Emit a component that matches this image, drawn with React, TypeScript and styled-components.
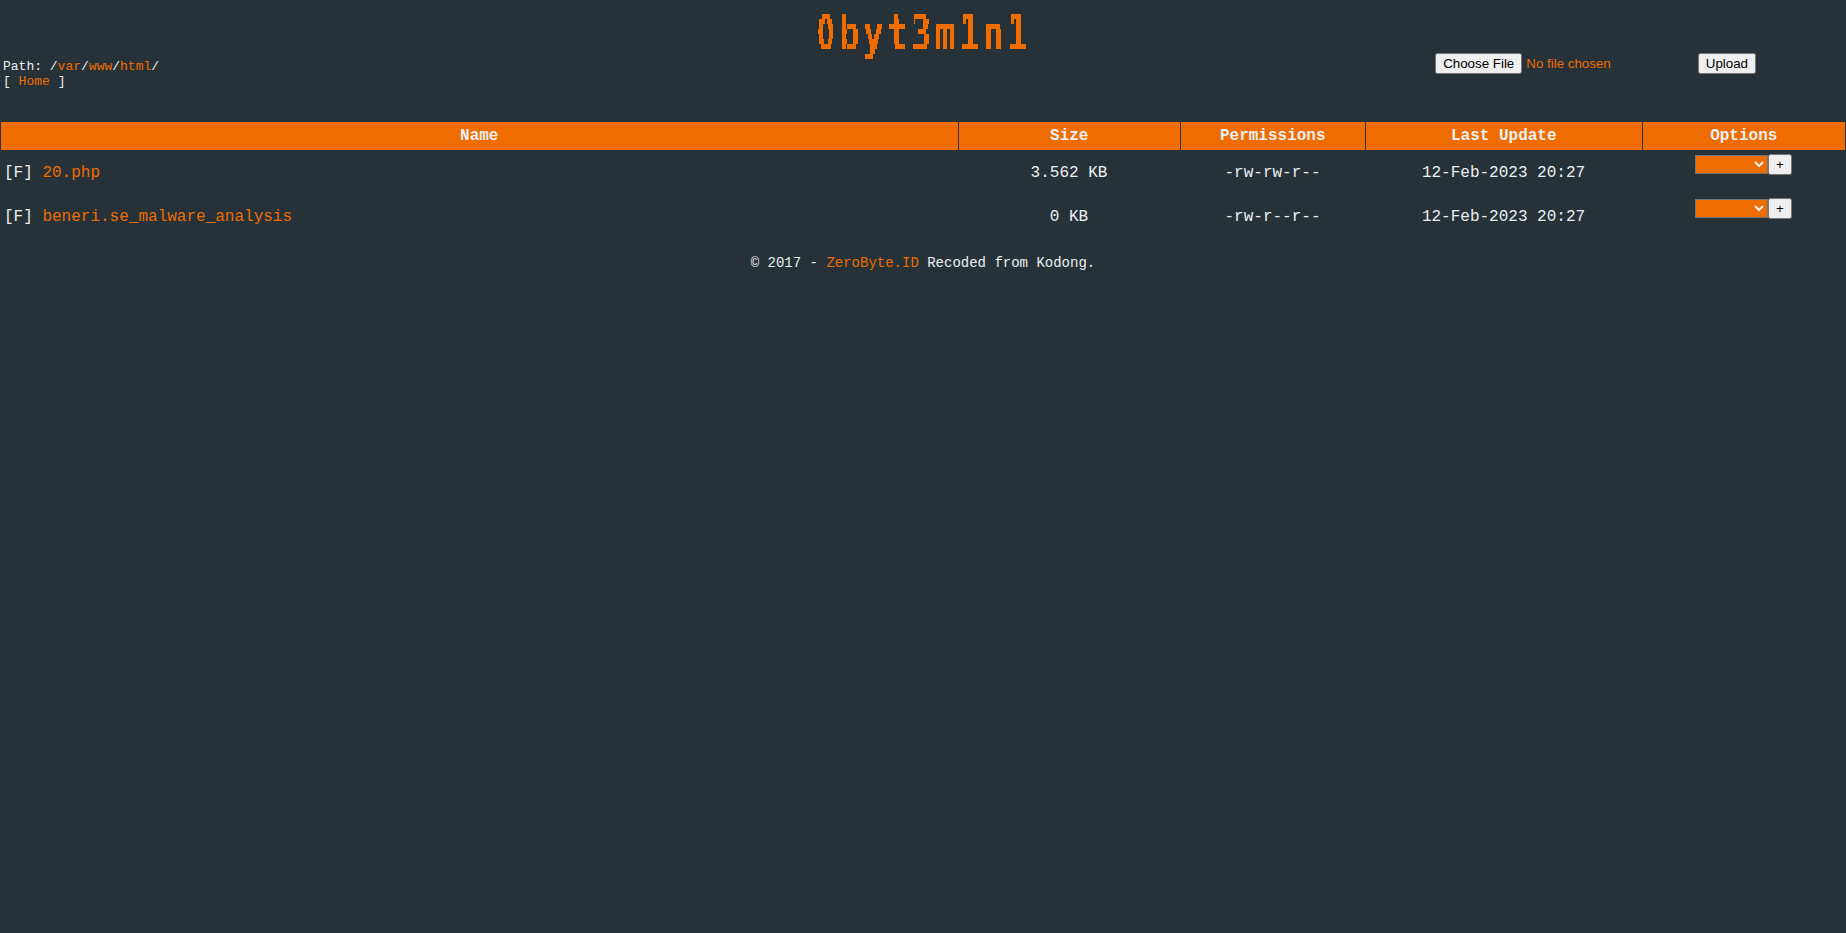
import React from 'react';
import styled, { createGlobalStyle } from 'styled-components';

type Entry = {
    name: string;
    size: string;
    permissions: string;
    updated: string;
};

const PATH = ['var', 'www', 'html'];

const ENTRIES: Entry[] = [
    { name: '20.php', size: '3.562 KB', permissions: '-rw-rw-r--', updated: '12-Feb-2023 20:27' },
    { name: 'beneri.se_malware_analysis', size: '0 KB', permissions: '-rw-r--r--', updated: '12-Feb-2023 20:27' },
];

// keeps one line of the title out of five and grows it to a 5px high step
const PixelFilter = () => (
    <FilterDefs aria-hidden="true">
        <filter
            id="pixel"
            filterUnits="userSpaceOnUse"
            primitiveUnits="userSpaceOnUse"
            x="0"
            y="0"
            width="1846"
            height="70"
            colorInterpolationFilters="sRGB"
        >
            <feFlood x="0" y="6" width="1" height="1" floodColor="#fff" result="dot" />
            <feComposite in="dot" in2="dot" operator="over" x="0" y="4" width="1" height="5" />
            <feTile x="0" y="0" width="1846" height="70" result="grid" />
            <feComposite in="SourceGraphic" in2="grid" operator="in" />
            <feComponentTransfer>
                <feFuncA type="discrete" tableValues="0 1" />
            </feComponentTransfer>
            <feMorphology operator="dilate" radius="0 2" />
        </filter>
    </FilterDefs>
);

const App = () => {
    return (
        <>
            <GlobalStyle />
            <PixelFilter />
            <Title>
                <TitleText><PlainZero>0</PlainZero>byt3m1n1</TitleText>
            </Title>

            <TopBar>
                <PathInfo>
                    <div>
                        Path: /
                        {PATH.map((part) => (
                            <React.Fragment key={part}>
                                <Link href="#">{part}</Link>/
                            </React.Fragment>
                        ))}
                    </div>
                    <div>[ <Link href="#">Home</Link> ]</div>
                </PathInfo>

                <UploadForm>
                    <FileInput type="file" />
                    <button type="button">Upload</button>
                </UploadForm>
            </TopBar>

            <FileTable>
                <HeaderRow>
                    <HeaderCell>Name</HeaderCell>
                    <HeaderCell>Size</HeaderCell>
                    <HeaderCell>Permissions</HeaderCell>
                    <HeaderCell>Last Update</HeaderCell>
                    <HeaderCell>Options</HeaderCell>
                </HeaderRow>

                {ENTRIES.map((entry) => (
                    <Row key={entry.name}>
                        <Cell $align="left">[F] <Link href="#">{entry.name}</Link></Cell>
                        <Cell>{entry.size}</Cell>
                        <Cell>{entry.permissions}</Cell>
                        <Cell>{entry.updated}</Cell>
                        <Options>
                            <ActionSelect defaultValue=""><option value="" /></ActionSelect>
                            <SubmitButton type="button">+</SubmitButton>
                        </Options>
                    </Row>
                ))}
            </FileTable>

            <Footer>
                © 2017 - <Link href="#">ZeroByte.ID</Link> Recoded from Kodong.
            </Footer>
        </>
    );
};

export default App;

const GlobalStyle = createGlobalStyle`
  body {
    margin: 0;
    background: #263238;
    color: #eceff1;
    font-family: 'Liberation Mono', monospace;
    font-size: 16px;
  }

  button, input, select {
    margin: 0;
    font-family: 'Liberation Sans', Arial, sans-serif;
    font-size: 13.3333px;
  }
`;

const FilterDefs = styled.svg`
  position: absolute;
  width: 0;
  height: 0;
`;

const Title = styled.h1`
  display: flex;
  justify-content: center;
  margin: 0;
  height: 52px;
  color: #ef6c00;
  font-family: 'DejaVu Sans Mono', monospace;
  font-size: 46px;
  font-weight: 700;
  line-height: 66px;
  filter: url(#pixel);
`;

const TitleText = styled.span`
  letter-spacing: 4.3px;
  white-space: nowrap;
  transform: scaleX(0.75);
`;

const PlainZero = styled.span`
  display: inline-block;
  width: 29px;
  margin-left: 3px;
  font-family: 'DejaVu Sans', sans-serif;
  letter-spacing: 0;
  transform: scaleX(0.72);
  transform-origin: left;
`;

const TopBar = styled.div`
  display: flex;
  justify-content: space-between;
  align-items: flex-start;
  height: 70px;
`;

const PathInfo = styled.div`
  padding: 7px 0 0 3px;
  font-size: 13px;
  line-height: 15px;
`;

const Link = styled.a`
  color: #ef6c00;
  text-decoration: none;
`;

const UploadForm = styled.form`
  display: flex;
  gap: 9.6px;
  margin: 1px 90px 0 0;
`;

const FileInput = styled.input`
  width: 253px;
  color: #ef6c00;
`;

const FileTable = styled.div`
  padding: 0 1px;
`;

const Row = styled.div`
  display: grid;
  grid-template-columns: 957px 221px 184px 276px 202px;
  column-gap: 1px;
  height: 44px;
`;

const HeaderRow = styled(Row)`
  height: 28px;
`;

const HeaderCell = styled.div`
  padding-right: 0.5px;
  background: #ef6c00;
  font-weight: 700;
  line-height: 28px;
  text-align: center;
`;

const Cell = styled.div<{ $align?: string }>`
  padding: 0 4px 0 3px;
  line-height: 46px;
  text-align: ${(props) => props.$align || 'center'};
`;

const Options = styled.div`
  display: flex;
  align-items: center;
  justify-content: center;
  height: 21px;
  padding: 4px 1px 0 0;
`;

const ActionSelect = styled.select`
  width: 73px;
  height: 19px;
  background: #ef6c00;
  color: #eceff1;
  border: 1px solid #767676;
  border-radius: 0;
`;

const SubmitButton = styled.button`
  width: 24px;
`;

const Footer = styled.div`
  padding-top: 17px;
  font-size: 14px;
  line-height: 16px;
  text-align: center;
`;
